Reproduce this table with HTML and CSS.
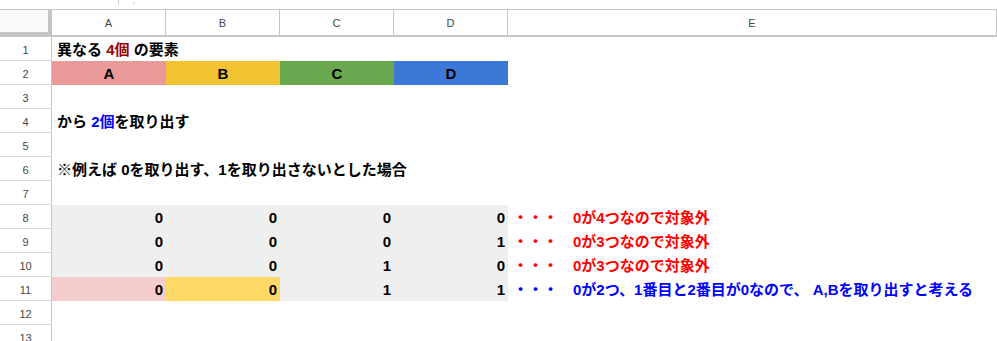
FILE: index.html
```html
<!DOCTYPE html>
<html lang="ja">
<head>
<meta charset="utf-8">
<title>Sheet</title>
<link rel="stylesheet" href="styles.css">
</head>
<body>
<div class="topbar"><span class="tick"></span><span class="dot"></span></div>
<div class="sheet">
  <div class="corner"></div>
  <div class="colh">A</div>
  <div class="colh">B</div>
  <div class="colh">C</div>
  <div class="colh">D</div>
  <div class="colh">E</div>

  <div class="rowh">1</div>
  <div class="cell text span"><span>異なる <span class="dred">4個</span> の要素</span></div>

  <div class="rowh">2</div>
  <div class="cell center bg-a">A</div>
  <div class="cell center bg-b">B</div>
  <div class="cell center bg-c">C</div>
  <div class="cell center bg-d">D</div>
  <div class="cell"></div>

  <div class="rowh">3</div>
  <div class="cell span"></div>

  <div class="rowh">4</div>
  <div class="cell text span"><span>から <span class="blue">2個</span>を取り出す</span></div>

  <div class="rowh">5</div>
  <div class="cell span"></div>

  <div class="rowh">6</div>
  <div class="cell text span"><span>※例えば 0を取り出す、1を取り出さないとした場合</span></div>

  <div class="rowh">7</div>
  <div class="cell span"></div>

  <div class="rowh">8</div>
  <div class="cell num grey">0</div>
  <div class="cell num grey">0</div>
  <div class="cell num grey">0</div>
  <div class="cell num grey">0</div>
  <div class="cell text red"><span>・・・　0が4つなので対象外</span></div>

  <div class="rowh">9</div>
  <div class="cell num grey">0</div>
  <div class="cell num grey">0</div>
  <div class="cell num grey">0</div>
  <div class="cell num grey">1</div>
  <div class="cell text red"><span>・・・　0が3つなので対象外</span></div>

  <div class="rowh">10</div>
  <div class="cell num grey">0</div>
  <div class="cell num grey">0</div>
  <div class="cell num grey">1</div>
  <div class="cell num grey">0</div>
  <div class="cell text red"><span>・・・　0が3つなので対象外</span></div>

  <div class="rowh">11</div>
  <div class="cell num pink">0</div>
  <div class="cell num yellow">0</div>
  <div class="cell num grey">1</div>
  <div class="cell num grey">1</div>
  <div class="cell text blue"><span>・・・　0が2つ、1番目と2番目が0なので、 A,Bを取り出すと考える</span></div>

  <div class="rowh">12</div>
  <div class="cell span"></div>

  <div class="rowh">13</div>
  <div class="cell span"></div>
</div>
</body>
</html>
```

FILE: styles.css
```css
html, body {
  margin: 0;
  padding: 0;
  background: #ffffff;
  overflow: hidden;
}

body {
  font-family: "Liberation Sans", "Noto Sans CJK JP", sans-serif;
}

.topbar {
  height: 9px;
  display: flex;
  align-items: flex-start;
}

.tick {
  width: 1px;
  height: 5px;
  margin-left: 118px;
  background: #d0d0d0;
}

.dot {
  width: 2px;
  height: 2px;
  margin-left: 14px;
  margin-top: 2px;
  background: #dcdcdc;
}

.sheet {
  display: grid;
  grid-template-columns: 52px 114px 114px 114px 114px 1fr;
  grid-template-rows: 28px;
  grid-auto-rows: 24px;
}

.corner {
  box-sizing: border-box;
  background: #f8f9fa;
  border-top: 1px solid #c4c7c5;
  border-right: 4px solid #c4c4c4;
  border-bottom: 5px solid #c4c4c4;
}

.colh {
  box-sizing: border-box;
  border-top: 1px solid #c4c7c5;
  border-bottom: 2px solid #c4c7c5;
  border-right: 1px solid #c4c7c5;
  display: flex;
  align-items: center;
  justify-content: center;
  font-size: 11px;
  color: #444746;
  padding-top: 1px;
}

.colh:last-child {
  border-right: none;
}

.rowh {
  box-sizing: border-box;
  border-right: 1px solid #c4c7c5;
  border-bottom: 1px solid #dadce0;
  display: flex;
  align-items: center;
  justify-content: center;
  font-size: 11px;
  color: #444746;
  padding-top: 3px;
}

.cell {
  box-sizing: border-box;
  display: flex;
  align-items: flex-end;
  padding: 0 3px 3px 3px;
  font-size: 15px;
  line-height: 17px;
  font-weight: bold;
  color: #000000;
  white-space: pre;
  min-width: 0;
}

.span {
  grid-column: 2 / -1;
}

.text {
  padding-left: 5px;
}

.center {
  justify-content: center;
}

.num {
  justify-content: flex-end;
}

.dred { color: #990000; }
.blue { color: #0000ff; }
.red { color: #ff0000; }

.bg-a { background: #ea9999; }
.bg-b { background: #f1c232; }
.bg-c { background: #6aa84f; }
.bg-d { background: #3c78d8; }

.grey { background: #efefef; }
.pink { background: #f4cccc; }
.yellow { background: #ffd966; }
```
